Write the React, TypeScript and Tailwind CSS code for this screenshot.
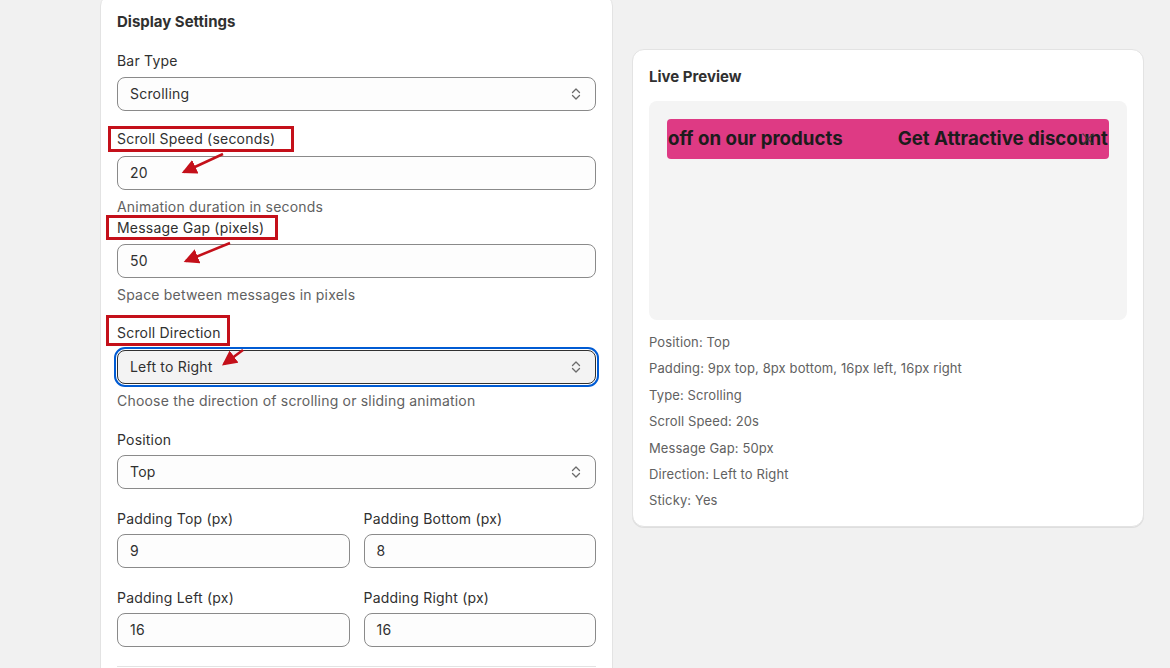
import React from "react";

function SelectChevron() {
  return (
    <svg width="20" height="20" viewBox="0 0 20 20" fill="none" className="shrink-0">
      <path d="M6.5 8.5L10 5L13.5 8.5" stroke="#6b6b6b" strokeWidth="1.3" strokeLinecap="round" strokeLinejoin="round" />
      <path d="M6.5 11.5L10 15L13.5 11.5" stroke="#6b6b6b" strokeWidth="1.3" strokeLinecap="round" strokeLinejoin="round" />
    </svg>
  );
}

function Label({ children }: { children: React.ReactNode }) {
  return <div className="text-sm leading-5 tracking-[0.2px] text-[#303030]">{children}</div>;
}

function Help({ children }: { children: React.ReactNode }) {
  return <div className="relative top-px text-sm leading-5 tracking-[0.2px] text-[#616161]">{children}</div>;
}

function TextField({ value, className = "" }: { value: string; className?: string }) {
  return (
    <div
      className={`flex h-[34px] items-center rounded-lg border border-[#8a8a8a] bg-[#fdfdfd] px-3 text-sm tracking-[0.2px] text-[#303030] ${className}`}
    >
      {value}
    </div>
  );
}

function SelectField({ value, className = "" }: { value: string; className?: string }) {
  return (
    <div
      className={`flex h-[34px] items-center justify-between rounded-lg border border-[#8a8a8a] bg-[#fdfdfd] pl-3 pr-[9px] text-sm tracking-[0.2px] text-[#303030] ${className}`}
    >
      <span>{value}</span>
      <SelectChevron />
    </div>
  );
}

const infoLines = [
  "Position: Top",
  "Padding: 9px top, 8px bottom, 16px left, 16px right",
  "Type: Scrolling",
  "Scroll Speed: 20s",
  "Message Gap: 50px",
  "Direction: Left to Right",
  "Sticky: Yes",
];

export default function App() {
  return (
    <div className="relative flex h-[668px] items-start gap-[19px] overflow-hidden bg-[#f1f1f1] pl-[100px] font-['Inter',sans-serif]">
      {/* Display settings form */}
      <div className="-mt-[6px] w-[513px] shrink-0 rounded-xl border border-[#e3e3e3] bg-white p-4">
        <div className="relative top-px text-[15px] font-bold leading-5 text-[#303030]">Display Settings</div>

        <div className="mt-5">
          <Label>Bar Type</Label>
        </div>
        <SelectField value="Scrolling" className="mt-[6px]" />

        <div className="relative mt-[18px]">
          <Label>Scroll Speed (seconds)</Label>
          <span className="absolute left-[-9px] top-[-3px] h-[26px] w-[186px] border-[3px] border-[#c4101a]" />
        </div>
        <TextField value="20" className="mt-[7px]" />
        <div className="mt-[6px]">
          <Help>Animation duration in seconds</Help>
        </div>

        <div className="relative mt-[2px]">
          <Label>Message Gap (pixels)</Label>
          <span className="absolute left-[-11px] top-[-3px] h-[25px] w-[172px] border-[3px] border-[#c4101a]" />
        </div>
        <TextField value="50" className="mt-[6px]" />
        <div className="mt-[6px]">
          <Help>Space between messages in pixels</Help>
        </div>

        <div className="relative mt-[19px]">
          <Label>Scroll Direction</Label>
          <span className="absolute left-[-11px] top-[-8px] h-[31px] w-[124px] border-[3px] border-[#c4101a]" />
        </div>
        <div className="mt-[7px] flex h-[34px] items-center justify-between rounded-lg border border-[#303030] bg-[#f3f3f3] pl-3 pr-[9px] text-sm tracking-[0.2px] text-[#303030] outline-2 outline-offset-1 outline-[#005bd3]">
          <span>Left to Right</span>
          <SelectChevron />
        </div>
        <div className="mt-[6px]">
          <Help>Choose the direction of scrolling or sliding animation</Help>
        </div>

        <div className="mt-5">
          <Label>Position</Label>
        </div>
        <SelectField value="Top" className="mt-[5px]" />

        <div className="mt-5 grid grid-cols-2 gap-x-[14px]">
          <div>
            <Label>Padding Top (px)</Label>
            <TextField value="9" className="mt-[5px]" />
          </div>
          <div>
            <Label>Padding Bottom (px)</Label>
            <TextField value="8" className="mt-[5px]" />
          </div>
        </div>

        <div className="mt-5 grid grid-cols-2 gap-x-[14px]">
          <div>
            <Label>Padding Left (px)</Label>
            <TextField value="16" className="mt-[5px]" />
          </div>
          <div>
            <Label>Padding Right (px)</Label>
            <TextField value="16" className="mt-[5px]" />
          </div>
        </div>

        <div className="mt-[19px] border-t border-[#e3e3e3]" />
        <div className="h-10" />
      </div>

      {/* Live preview */}
      <div className="mt-[49px] w-[512px] shrink-0 rounded-xl border border-[#e3e3e3] bg-white px-4 pb-4 pt-[17px] shadow-[0_1px_0_0_rgba(0,0,0,0.08)]">
        <div className="text-[15px] font-bold leading-5 text-[#303030]">Live Preview</div>
        <div className="mt-[14px] h-[219px] rounded-lg bg-[#f4f4f4] p-[18px]">
          <div className="relative flex h-10 items-center overflow-hidden rounded-[4px] bg-[#de3a84]">
            <div className="flex gap-[55px] whitespace-nowrap pl-px text-[18.7px] font-bold leading-6 text-[#1c1c1c]">
              <span>off on our products</span>
              <span>Get Attractive discount</span>
            </div>
            <svg
              width="14"
              height="14"
              viewBox="0 0 14 14"
              className="absolute right-[14px] top-[13px] opacity-80"
            >
              <path d="M2 2l10 10M12 2L2 12" stroke="#3a3a3a" strokeWidth="1.4" strokeLinecap="round" />
            </svg>
          </div>
        </div>
        <div className="mt-3 flex flex-col gap-[6.4px]">
          {infoLines.map((t) => (
            <div key={t} className="text-[13px] leading-5 tracking-[0.12px] text-[#616161]">
              {t}
            </div>
          ))}
        </div>
      </div>

      {/* Annotation arrows */}
      <svg className="pointer-events-none absolute left-0 top-0" width="1170" height="668">
        <defs>
          <marker id="head" markerWidth="6" markerHeight="6" refX="5" refY="3" orient="auto" markerUnits="strokeWidth">
            <path d="M0 0L6 3L0 6z" fill="#c4101a" />
          </marker>
        </defs>
        <line x1="223" y1="154" x2="184" y2="172" stroke="#c4101a" strokeWidth="2.5" markerEnd="url(#head)" />
        <line x1="230" y1="243" x2="186" y2="261" stroke="#c4101a" strokeWidth="2.5" markerEnd="url(#head)" />
        <line x1="243" y1="350" x2="224" y2="364" stroke="#c4101a" strokeWidth="2.5" markerEnd="url(#head)" />
      </svg>
    </div>
  );
}
